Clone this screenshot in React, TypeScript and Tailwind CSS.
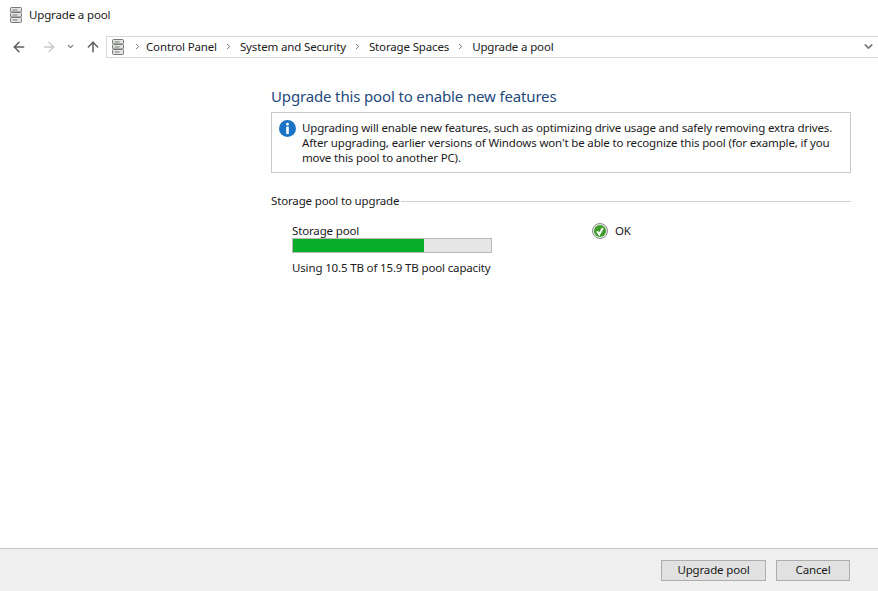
import { ArrowLeft, ArrowRight, ArrowUp, ChevronDown, ChevronRight } from "lucide-react";

const crumbs: string[] = ["Control Panel", "System and Security", "Storage Spaces", "Upgrade a pool"];

function PoolIcon() {
  return (
    <svg width="12" height="16" viewBox="0 0 12 16" fill="none">
      <rect x="0.5" y="0.5" width="11" height="4.5" rx="1" fill="#e4e4e4" stroke="#777777" />
      <rect x="0.5" y="5.5" width="11" height="4.5" rx="1" fill="#e4e4e4" stroke="#777777" />
      <rect x="0.5" y="10.5" width="11" height="5" rx="1" fill="#e4e4e4" stroke="#777777" />
      <path d="M2.5 3h5M2.5 8h5M2.5 13h5" stroke="#6f7f6f" />
    </svg>
  );
}

export default function App() {
  return (
    <div className="flex flex-col w-[878px] h-[591px] overflow-hidden bg-white text-[11.5px] leading-[16px] tracking-[-0.15px] whitespace-nowrap text-[#1a1a1a] font-['Noto_Sans',sans-serif]">
      <div className="flex items-center h-[30px] pl-[10px] gap-[7px] shrink-0">
        <PoolIcon />
        <span>Upgrade a pool</span>
      </div>

      <div className="flex items-center h-[21px] mt-[6px] shrink-0">
        <div className="flex items-center w-[106px] pl-[11px] shrink-0">
          <ArrowLeft size={16} strokeWidth={2.25} className="text-[#5e5e5e]" />
          <ArrowRight size={16} strokeWidth={2} className="ml-[14px] text-[#c9c9c9]" />
          <ChevronDown size={9} strokeWidth={3} className="ml-[9px] text-[#777777]" />
          <ArrowUp size={16} strokeWidth={2.25} className="ml-[10px] text-[#5e5e5e]" />
        </div>
        <div className="flex flex-1 items-center h-[22px] border-y border-l border-[#d9d9d9] pl-[5px] pr-[3px]">
          <PoolIcon />
          <ChevronRight size={9} strokeWidth={2.5} className="ml-[9px] text-[#666666]" />
          <div className="flex items-center">
            {crumbs.map((c, i) => (
              <div key={c} className="flex items-center">
                {i > 0 && <ChevronRight size={9} strokeWidth={2.5} className="mx-[7px] text-[#666666]" />}
                <span className={i === 0 ? "ml-[4px]" : ""}>{c}</span>
              </div>
            ))}
          </div>
          <ChevronDown size={13} strokeWidth={3} className="ml-auto text-[#777777]" />
        </div>
      </div>

      <main className="flex-1 pl-[271px] pr-[27px] pt-[29px]">
        <h1 className="text-[15px] leading-[20px] text-[#1f4a7c]">Upgrade this pool to enable new features</h1>

        <div className="flex h-[61px] mt-[6px] border border-[#c9c9c9] pl-[7px] pt-[7px] gap-[6px]">
          <svg width="17" height="17" viewBox="0 0 17 17" className="shrink-0">
            <circle cx="8.5" cy="8.5" r="8.5" fill="#1a73c5" />
            <circle cx="8.5" cy="4.2" r="1.4" fill="#ffffff" />
            <rect x="7.2" y="6.6" width="2.6" height="7.4" fill="#ffffff" />
          </svg>
          <p className="leading-[15px]">
            Upgrading will enable new features, such as optimizing drive usage and safely removing extra drives.
            <br />
            After upgrading, earlier versions of Windows won't be able to recognize this pool (for example, if you
            <br />
            move this pool to another PC).
          </p>
        </div>

        <div className="flex items-center mt-[20px] gap-[2px]">
          <span>Storage pool to upgrade</span>
          <div className="flex-1 h-px bg-[#d0d0d0]" />
        </div>

        <div className="flex mt-[14px] pl-[21px]">
          <div className="w-[200px]">
            <div className="leading-[15px]">Storage pool</div>
            <div className="h-[15px] border border-[#b8b8b8] bg-[#e6e6e6]">
              <div className="h-full bg-[#09ae28]" style={{ width: `${(10.5 / 15.9) * 100}%` }} />
            </div>
            <div className="mt-[7px]">Using 10.5 TB of 15.9 TB pool capacity</div>
          </div>
          <div className="flex items-start ml-[100px] gap-[7px]">
            <svg width="16" height="16" viewBox="0 0 16 16" className="shrink-0">
              <circle cx="8" cy="8" r="7.5" fill="#e8efe4" stroke="#8a8a8a" />
              <circle cx="8" cy="8" r="6" fill="#3f9a2c" />
              <path d="M5 8.2l2.2 3.2 3.6-6.4" fill="none" stroke="#ffffff" strokeWidth="2" />
            </svg>
            <span>OK</span>
          </div>
        </div>
      </main>

      <footer className="flex items-center justify-end h-[43px] shrink-0 border-t border-[#c8c8c8] bg-[#f0f0f0] pr-[28px] gap-[10px]">
        <button className="w-[105px] h-[21px] border border-[#adadad] bg-[#e1e1e1] leading-none">Upgrade pool</button>
        <button className="w-[74px] h-[21px] border border-[#adadad] bg-[#e1e1e1] leading-none">Cancel</button>
      </footer>
    </div>
  );
}
